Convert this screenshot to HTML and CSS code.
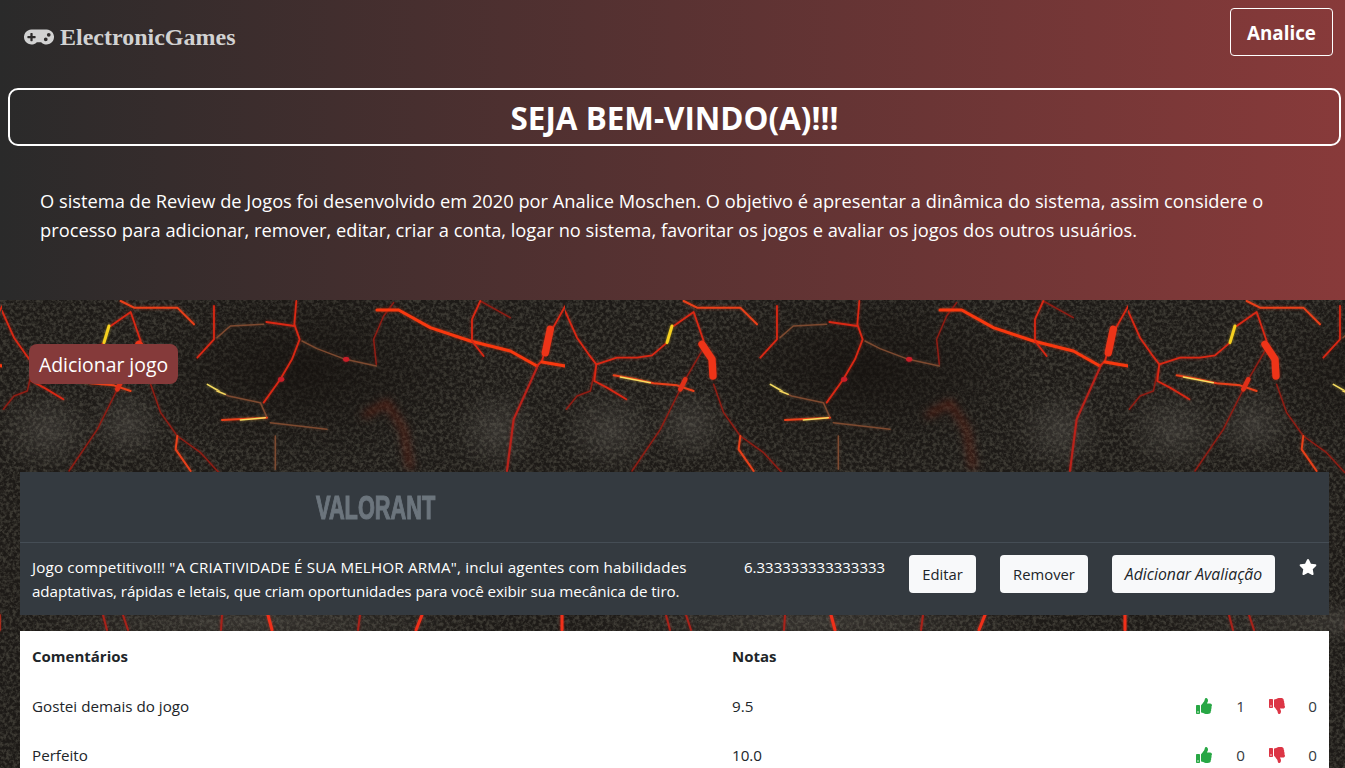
FILE: index.html
```html
<!DOCTYPE html>
<html lang="pt-BR">
<head>
<meta charset="utf-8">
<title>ElectronicGames</title>
<link rel="stylesheet" href="styles.css">
</head>
<body>
<svg class="lava" aria-hidden="true">
  <defs>
    <filter id="noise" x="0" y="0" width="100%" height="100%" color-interpolation-filters="sRGB">
      <feTurbulence type="fractalNoise" baseFrequency="0.3" numOctaves="3" seed="7"/>
      <feColorMatrix type="matrix" values="0 0 0 0 0.27  0 0 0 0 0.26  0 0 0 0 0.23  3 0 0 0 -1.15"/>
    </filter>
    <filter id="crack" filterUnits="userSpaceOnUse" x="0" y="0" width="563" height="468" color-interpolation-filters="sRGB">
      <feGaussianBlur in="SourceGraphic" stdDeviation="1.8" result="blurred"/>
      <feComponentTransfer in="blurred" result="glow"><feFuncA type="linear" slope=".55"/></feComponentTransfer>
      <feGaussianBlur in="SourceGraphic" stdDeviation="0.4" result="core"/>
      <feMerge><feMergeNode in="glow"/><feMergeNode in="core"/></feMerge>
    </filter>
    <filter id="wide" filterUnits="userSpaceOnUse" x="0" y="0" width="1700" height="1400" color-interpolation-filters="sRGB"><feGaussianBlur stdDeviation="12"/></filter>
    <radialGradient id="patch"><stop offset="0" stop-color="#77736c" stop-opacity=".28"/><stop offset="1" stop-color="#77736c" stop-opacity="0"/></radialGradient>
    <radialGradient id="shade"><stop offset="0" stop-color="#14100d" stop-opacity=".7"/><stop offset="1" stop-color="#14100d" stop-opacity="0"/></radialGradient>
    <pattern id="tile" patternUnits="userSpaceOnUse" x="2" y="300" width="563" height="468">
      <ellipse fill="url(#shade)" cx="300" cy="70" rx="170" ry="90"/>
      <ellipse fill="url(#patch)" cx="45" cy="130" rx="50" ry="42"/>
      <ellipse fill="url(#patch)" cx="125" cy="125" rx="40" ry="38"/>
      <ellipse fill="url(#patch)" cx="495" cy="130" rx="45" ry="42"/>
      <ellipse fill="url(#patch)" cx="250" cy="322" rx="230" ry="22"/>
      <path class="dimblob" filter="url(#wide)" transform="translate(215,-4) scale(.3333)" d="M440 360L510 320 560 400 580 520"/>
      <g filter="url(#crack)">
      <g transform="translate(-8,-4) scale(.3333)" fill="none" stroke-linecap="round" stroke-linejoin="round">
        <path class="thin" d="M118 205L100 285 60 300 28 340"/>
        <path class="thin" d="M435 165L385 250 360 300 310 400 225 525"/>
        <path class="thin" d="M470 265L500 350 550 420 620 470 675 530"/>
        <path class="med" d="M24 45L60 125 95 175 118 205 112 255 150 275 208 310"/>
        <path class="med" d="M118 205L180 185 240 185 285 178 330 140"/>
        <path class="med" d="M350 90L410 48 440 135"/>
        <path class="org" d="M380 15L420 35 550 35 600 85"/>
        <path class="med" d="M610 185L660 130 660 30"/>
        <path class="org" d="M170 238L230 248 290 262 360 268 410 285"/>
        <path class="org" d="M550 420L545 460 590 525"/>
        <path class="blob" d="M435 145L465 190 468 240"/>
        <path class="blob2" d="M385 250L370 280"/>
        <path class="yel" d="M330 140L345 90"/>
        <path class="yel2" d="M190 243L280 260"/>
        <path class="yel2" d="M640 265L675 285"/>
      </g>
      <g transform="translate(215,-4) scale(.3333)" fill="none" stroke-linecap="round" stroke-linejoin="round">
        <path class="tan" d="M0 125L40 90 140 85"/>
        <path class="tan" d="M255 135L300 158 385 190 478 210"/>
        <path class="thin" d="M478 205L470 130 500 60 530 20"/>
        <path class="tan" d="M160 380L330 400"/>
        <path class="tan" d="M175 420L175 520"/>
        <path class="tan" d="M0 285L35 300 130 320 150 365"/>
        <path class="org" d="M15 372L150 365"/>
        <path class="yel2" d="M70 372L145 365"/>
        <path class="yel2" d="M0 285L25 295"/>
        <path class="med" d="M238 15L232 85 248 130 225 190 190 250 140 320"/>
        <path class="med" d="M148 78L232 90"/>
        <path class="thin" d="M790 15L880 65"/>
        <path class="med" d="M790 15L765 70 765 135"/>
        <path class="big" d="M480 42L545 42 640 95 760 135 880 165 960 210"/>
        <path class="med" d="M765 135L800 180"/>
        <path class="med" d="M1045 30L1000 110 975 195 960 210"/>
        <path class="blob" d="M1000 100L985 170"/>
        <path class="big" d="M975 198L1045 210"/>
        <path class="thick" d="M960 215L890 370 870 525"/>
        <path class="dot" d="M385 190L390 190"/>
        <path class="dot" d="M190 250L195 250"/>
      </g>
      <g fill="none" stroke-linecap="round">
        <path class="seg" d="M101 315L105 330"/>
        <path class="seg" d="M121 315L126 330"/>
        <path class="seg hot" d="M266 315L270 330"/>
        <path class="seg" d="M356 330L358 315"/>
        <path class="seg hot" d="M414 330L420 315"/>
        <path class="seg hot" d="M560 315L560 330"/>
        <path class="seg" d="M220 315L219 330"/>
      </g>
      </g>
    </pattern>
  </defs>
  <rect class="lava-base" width="100%" height="100%"/>
  <rect class="lava-noise" filter="url(#noise)" width="100%" height="100%"/>
  <rect fill="url(#tile)" width="100%" height="100%"/>
</svg>

<header class="hero">
  <nav class="topbar">
    <a class="brand">
      <svg class="brand-icon" viewBox="0 0 640 512"><path d="M480.07 96H160a160 160 0 1 0 114.24 272h91.52A160 160 0 1 0 480.07 96zM248 268a12 12 0 0 1-12 12h-52v52a12 12 0 0 1-12 12h-24a12 12 0 0 1-12-12v-52H84a12 12 0 0 1-12-12v-24a12 12 0 0 1 12-12h52v-52a12 12 0 0 1 12-12h24a12 12 0 0 1 12 12v52h52a12 12 0 0 1 12 12zm216 76a40 40 0 1 1 40-40 40 40 0 0 1-40 40zm64-96a40 40 0 1 1 40-40 40 40 0 0 1-40 40z"/></svg>
      <span>ElectronicGames</span>
    </a>
    <button class="user-btn">Analice</button>
  </nav>
  <h1 class="welcome">SEJA BEM-VINDO(A)!!!</h1>
  <p class="intro">O sistema de Review de Jogos foi desenvolvido em 2020 por Analice Moschen. O objetivo é apresentar a dinâmica do sistema, assim considere o<br>processo para adicionar, remover, editar, criar a conta, logar no sistema, favoritar os jogos e avaliar os jogos dos outros usuários.</p>
</header>

<main class="content">
  <button class="add-game">Adicionar jogo</button>

  <section class="game-card">
    <h2 class="game-title"><span>VALORANT</span></h2>
    <div class="game-row">
      <p class="game-desc"><span class="line-a">Jogo competitivo!!! "A CRIATIVIDADE É SUA MELHOR ARMA", inclui agentes com habilidades</span><br><span class="line-b">adaptativas, rápidas e letais, que criam oportunidades para você exibir sua mecânica de tiro.</span></p>
      <span class="game-score">6.333333333333333</span>
      <button class="light-btn edit">Editar</button>
      <button class="light-btn remove">Remover</button>
      <button class="light-btn review">Adicionar Avaliação</button>
      <svg class="star" viewBox="0 0 576 512"><path d="M259.3 17.8L194 150.2 47.9 171.5c-26.2 3.8-36.7 36.1-17.7 54.6l105.7 103-25 145.5c-4.5 26.3 23.2 46 46.4 33.7L288 439.6l130.7 68.7c23.2 12.2 50.9-7.4 46.4-33.7l-25-145.5 105.7-103c19-18.5 8.5-50.8-17.7-54.6L382 150.2 316.7 17.8c-11.7-23.6-45.6-23.9-57.4 0z"/></svg>
    </div>
  </section>

  <table class="reviews">
    <thead>
      <tr><th class="c-comment">Comentários</th><th class="c-grade">Notas</th><th class="c-votes"></th></tr>
    </thead>
    <tbody>
      <tr>
        <td>Gostei demais do jogo</td><td>9.5</td>
        <td class="c-votes"><div class="votes">
          <svg class="thumb up" viewBox="0 0 512 512"><use href="#up"/></svg><span class="n">1</span>
          <svg class="thumb down" viewBox="0 0 512 512"><use href="#down"/></svg><span class="n">0</span>
        </div></td>
      </tr>
      <tr>
        <td>Perfeito</td><td>10.0</td>
        <td class="c-votes"><div class="votes">
          <svg class="thumb up" viewBox="0 0 512 512"><use href="#up"/></svg><span class="n">0</span>
          <svg class="thumb down" viewBox="0 0 512 512"><use href="#down"/></svg><span class="n">0</span>
        </div></td>
      </tr>
    </tbody>
  </table>
</main>

<svg class="defs" aria-hidden="true"><defs>
  <path id="up" d="M104 224H24c-13.255 0-24 10.745-24 24v240c0 13.255 10.745 24 24 24h80c13.255 0 24-10.745 24-24V248c0-13.255-10.745-24-24-24zM64 472c-13.255 0-24-10.745-24-24s10.745-24 24-24 24 10.745 24 24-10.745 24-24 24zM384 81.452c0 42.416-25.97 66.208-33.277 94.548h101.723c33.397 0 59.397 27.746 59.553 58.098.084 17.938-7.546 37.249-19.439 49.197l-.11.11c9.836 23.337 8.237 56.037-9.308 79.469 8.681 25.895-.069 57.704-16.382 74.757 4.298 17.598 2.244 32.575-6.148 44.632C440.202 511.587 389.616 512 346.839 512l-2.845-.001c-48.287-.017-87.806-17.598-119.56-31.725-15.957-7.099-36.821-15.887-52.651-16.178-6.54-.12-11.783-5.457-11.783-11.998v-213.77c0-3.2 1.282-6.271 3.558-8.521 39.614-39.144 56.648-80.587 89.117-113.111 14.804-14.832 20.188-37.236 25.393-58.902C282.515 39.293 291.817 0 312 0c24 0 72 8 72 81.452z"/>
  <path id="down" d="M0 56v240c0 13.255 10.745 24 24 24h80c13.255 0 24-10.745 24-24V56c0-13.255-10.745-24-24-24H24C10.745 32 0 42.745 0 56zm40 200c0-13.255 10.745-24 24-24s24 10.745 24 24-10.745 24-24 24-24-10.745-24-24zm272 256c-20.183 0-29.485-39.293-33.931-57.795-5.206-21.666-10.589-44.07-25.393-58.902-32.469-32.524-49.503-73.967-89.117-113.111a11.98 11.98 0 0 1-3.558-8.521V59.901c0-6.541 5.243-11.878 11.783-11.998 15.831-.29 36.694-9.079 52.651-16.178C256.189 17.598 295.709.017 343.995 0h2.844c42.777 0 93.363.413 113.774 29.737 8.392 12.057 10.446 27.034 6.148 44.632 16.312 17.053 25.063 48.863 16.382 74.757 17.544 23.432 19.143 56.132 9.308 79.469l.11.11c11.893 11.949 19.523 31.259 19.439 49.197-.156 30.352-26.157 58.098-59.553 58.098H350.723C358.03 364.34 384 388.132 384 430.548 384 504 336 512 312 512z"/>
</defs></svg>
</body>
</html>
```
FILE: styles.css
```css
* { box-sizing: border-box; }
html, body { margin: 0; padding: 0; height: 768px; overflow: hidden; }
body {
  position: relative;
  font-family: "Open Sans", "Noto Sans", sans-serif;
  color: #212529;
  background: #1e1b18;
}
.lava { position: absolute; left: 0; top: 0; width: 1345px; height: 768px; z-index: 0; }
.lava-base { fill: #1d1a17; }
.lava-noise { opacity: .8; }
.defs { position: absolute; width: 0; height: 0; }
.thin { stroke: #8f1d14; stroke-width: 4.5; }
.med { stroke: #d92814; stroke-width: 5.5; }
.org { stroke: #e8401a; stroke-width: 6; }
.big { stroke: #f8380f; stroke-width: 9; }
.thick { stroke: #b8221a; stroke-width: 6.5; }
.blob { stroke: #ee3418; stroke-width: 22; }
.blob2 { stroke: #e03018; stroke-width: 14; }
.yel { stroke: #f5d020; stroke-width: 9; }
.yel2 { stroke: #f5dc60; stroke-width: 4.5; }
.tan { stroke: #7d4a30; stroke-width: 4.5; }
.dot { stroke: #c91e28; stroke-width: 14; }
.dimblob { stroke: #8a2412; stroke-width: 14; fill: none; opacity: .55; }
.seg { stroke: #a8221a; stroke-width: 2; }
.hot { stroke: #f0301a; stroke-width: 3; }

.hero {
  position: relative;
  z-index: 1;
  height: 300px;
  padding: 8px 12px 0 8px;
  background: linear-gradient(to right, #2a2a2a, #883a3a);
}
.topbar { display: flex; justify-content: space-between; align-items: flex-start; height: 80px; padding-left: 16px; }
.brand { display: flex; align-items: center; gap: 6px; height: 58px; color: #d2d2d2; }
.brand span { font: bold 24px "Liberation Serif", serif; }
.brand-icon { width: 30px; height: 24px; fill: #d2d2d2; }
.user-btn {
  width: 103px;
  height: 48px;
  padding: 1px 0 0;
  font: 700 18.8px "Open Sans", sans-serif;
  color: #fff;
  background: transparent;
  border: 1px solid #fff;
  border-radius: 4px;
}
.welcome {
  margin: 0;
  width: 1333px;
  height: 58px;
  border: 2px solid #fff;
  border-radius: 10px;
  color: #fff;
  font-size: 31.4px;
  font-weight: 700;
  line-height: 56px;
  text-align: center;
}
.intro {
  margin: 40px 0 0 32px;
  color: #fff;
  font-size: 18.27px;
  line-height: 29px;
  white-space: nowrap;
}

.content { position: relative; z-index: 1; padding: 44px 16px 0 20px; }
.add-game {
  display: block;
  margin-left: 9px;
  width: 149px;
  height: 40px;
  padding: 0;
  font: 19.4px "Open Sans", sans-serif;
  color: #fff;
  background: #853a3a;
  border: 0;
  border-radius: 8px;
}
.game-card { margin-top: 88px; background: #343a40; color: #fff; }
.game-title {
  margin: 0;
  height: 71px;
  border-bottom: 1px solid #454d55;
  padding: 17px 0 0 296px;
}
.game-title span {
  display: inline-block;
  font: bold 34px/36px "Liberation Sans", sans-serif;
  color: #6c757d;
  -webkit-text-stroke: 1.2px #6c757d;
  transform: scaleX(.64);
  transform-origin: left center;
  white-space: nowrap;
}
.game-row { display: flex; align-items: flex-start; height: 72px; padding: 12px 12px 0; }
.game-desc { margin: 0; width: 712px; font-size: 15.2px; line-height: 24px; white-space: nowrap; }
.line-a { letter-spacing: .16px; }
.line-b { letter-spacing: -.07px; }
.game-score { width: 165px; font-size: 15px; line-height: 24px; white-space: nowrap; }
.light-btn {
  height: 38px;
  padding: 0;
  font: 14.8px "Open Sans", sans-serif;
  color: #212529;
  background: #f8f9fa;
  border: 0;
  border-radius: 4px;
}
.edit { width: 67px; }
.remove { width: 88px; margin-left: 24px; }
.review { width: 163px; margin-left: 24px; font-style: italic; font-size: 15.8px; }
.star { width: 18px; height: 16px; margin-left: 24px; margin-top: 4px; fill: #fff; }

.reviews {
  width: 100%;
  margin-top: 16px;
  border-collapse: collapse;
  background: #fff;
  table-layout: fixed;
  font-size: 15.2px;
  line-height: 24px;
}
.reviews th, .reviews td { padding: 14px 12px 11px; text-align: left; }
.reviews th { font-weight: 700; font-size: 15px; padding: 13px 12px 12px; }
.c-comment { width: 700px; }
.c-grade { width: 300px; }
.votes { display: flex; justify-content: flex-end; align-items: center; }
.thumb { width: 16px; height: 16px; margin-left: 24px; }
.n { width: 32px; text-align: right; color: #343a40; }
.thumb.up + .n { width: 33px; }
.thumb.up { fill: #28a745; }
.thumb.down { fill: #dc3545; }
```
